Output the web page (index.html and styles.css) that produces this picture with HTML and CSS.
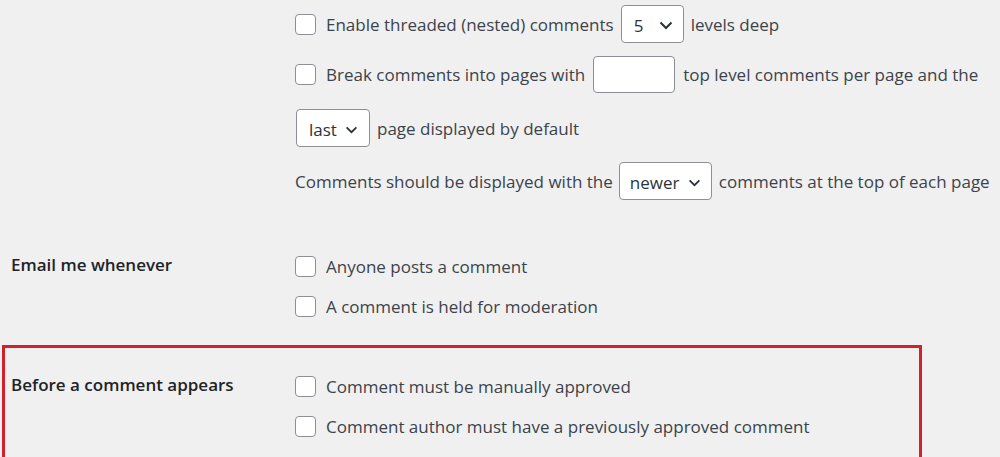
FILE: index.html
```html
<!DOCTYPE html>
<html lang="en">
<head>
  <meta charset="UTF-8">
  <meta name="viewport" content="width=device-width, initial-scale=1.0">
  <title>Discussion Settings</title>
  <link rel="stylesheet" href="styles.css">
</head>
<body>
  <div class="form-table">

    <div class="setting">
      <div class="setting-label"></div>
      <div class="setting-fields">
        <div class="field-row row-threaded">
          <span class="checkbox"></span>
          <span>Enable threaded (nested) comments</span>
          <span class="select select-levels">5
            <svg class="chevron" viewBox="0 0 14 9" width="14" height="9"><path d="M1.5 1.5 L7 7 L12.5 1.5" fill="none" stroke="#2c3338" stroke-width="2"/></svg>
          </span>
          <span>levels deep</span>
        </div>
        <div class="field-row row-pages">
          <span class="checkbox"></span>
          <span>Break comments into pages with</span>
          <span class="text-input"></span>
          <span>top level comments per page and the</span>
        </div>
        <div class="field-row row-default">
          <span class="select select-page">last
            <svg class="chevron" viewBox="0 0 14 9" width="13" height="8"><path d="M1.5 1.5 L7 7 L12.5 1.5" fill="none" stroke="#2c3338" stroke-width="2"/></svg>
          </span>
          <span>page displayed by default</span>
        </div>
        <div class="field-row">
          <span>Comments should be displayed with the</span>
          <span class="select select-order">newer
            <svg class="chevron" viewBox="0 0 14 9" width="13" height="8"><path d="M1.5 1.5 L7 7 L12.5 1.5" fill="none" stroke="#2c3338" stroke-width="2"/></svg>
          </span>
          <span>comments at the top of each page</span>
        </div>
      </div>
    </div>

    <div class="setting setting-email">
      <div class="setting-label">Email me whenever</div>
      <div class="setting-fields">
        <div class="check-row">
          <span class="checkbox"></span>
          <span>Anyone posts a comment</span>
        </div>
        <div class="check-row">
          <span class="checkbox"></span>
          <span>A comment is held for moderation</span>
        </div>
      </div>
    </div>

    <div class="setting setting-highlight">
      <div class="setting-label">Before a comment appears</div>
      <div class="setting-fields">
        <div class="check-row">
          <span class="checkbox"></span>
          <span>Comment must be manually approved</span>
        </div>
        <div class="check-row">
          <span class="checkbox"></span>
          <span>Comment author must have a previously approved comment</span>
        </div>
      </div>
    </div>

  </div>
</body>
</html>
```

FILE: styles.css
```css
body {
  margin: 0;
  background-color: #f0f0f1;
  color: #3c434a;
  font-family: "Open Sans", "Noto Sans", sans-serif;
  font-size: 17px;
  overflow: hidden;
}

.form-table {
  padding-top: 5px;
}

.setting {
  display: grid;
  grid-template-columns: 284px 1fr;
  padding-left: 11px;
}

.setting-label {
  color: #1d2327;
  font-weight: 600;
}

.field-row {
  display: flex;
  align-items: center;
  height: 38px;
  white-space: nowrap;
}

.row-threaded {
  margin-bottom: 12px;
}

.row-pages {
  margin-bottom: 16px;
}

.row-default {
  margin-bottom: 15px;
}

.check-row {
  display: flex;
  align-items: center;
  height: 40px;
  white-space: nowrap;
}

.checkbox {
  width: 19px;
  height: 19px;
  border: 1px solid #8c8f94;
  border-radius: 4px;
  background-color: #fff;
  margin-right: 10px;
  flex-shrink: 0;
}

.select {
  display: flex;
  align-items: center;
  justify-content: space-between;
  box-sizing: border-box;
  height: 38px;
  margin: 0 7px;
  padding: 2px 10px 0 12px;
  border: 1px solid #8c8f94;
  border-radius: 4px;
  background-color: #fff;
  color: #2c3338;
}

.select-levels {
  width: 63px;
}

.select-page {
  width: 74px;
  margin-left: 1px;
  padding-right: 11px;
}

.select-order {
  width: 93px;
  margin-left: 6px;
  padding-left: 10px;
}

.chevron {
  margin-top: 1px;
}

.text-input {
  box-sizing: border-box;
  width: 82px;
  height: 37px;
  margin: 0 8px;
  border: 1px solid #8c8f94;
  border-radius: 4px;
  background-color: #fff;
}

.setting-email {
  margin-top: 46px;
}

.setting-email .setting-label {
  padding-top: 7px;
}

.setting-highlight {
  width: 908px;
  margin: 19px 0 0 2px;
  padding: 18px 0 14px 6px;
  border: 3px solid #d2202c;
}

.setting-highlight .setting-label {
  padding-top: 7px;
}
```
